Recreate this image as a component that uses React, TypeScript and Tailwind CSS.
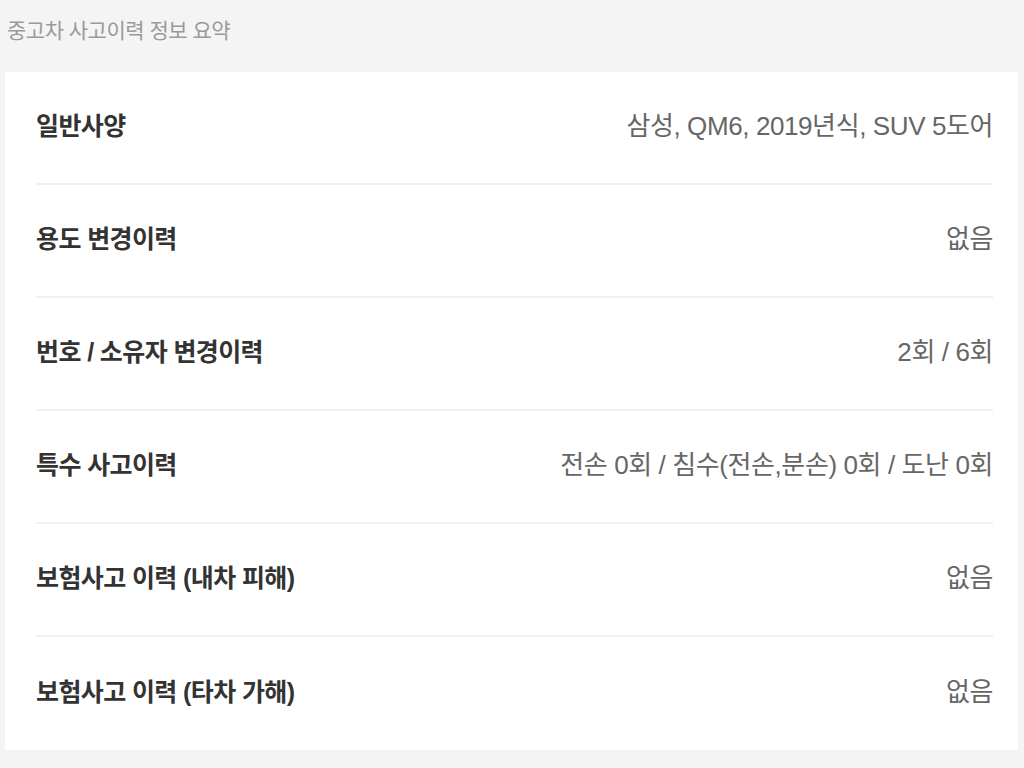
import React from "react";

const rows: [string, string][] = [
  ["일반사양", "삼성, QM6, 2019년식, SUV 5도어"],
  ["용도 변경이력", "없음"],
  ["번호 / 소유자 변경이력", "2회 / 6회"],
  ["특수 사고이력", "전손 0회 / 침수(전손,분손) 0회 / 도난 0회"],
  ["보험사고 이력 (내차 피해)", "없음"],
  ["보험사고 이력 (타차 가해)", "없음"],
];

export default function App() {
  return (
    <div
      className="w-[1024px] h-[768px] bg-[#f4f4f4] overflow-hidden"
      style={{ fontFamily: '"Liberation Sans", "Noto Sans CJK KR", sans-serif' }}
    >
      <div className="h-[72px] pl-[7px] pt-[16px] text-[21px] leading-[30px] text-[#9a9a9a] tracking-[-0.5px]">
        중고차 사고이력 정보 요약
      </div>
      <div className="ml-[5px] mr-[6px] bg-white pl-[31px] pr-[25px]">
        {rows.map(([label, value], i) => (
          <div
            key={i}
            className={`flex items-center justify-between h-[113px] pb-[2px] ${
              i < rows.length - 1 ? "border-b-2 border-[#f0f0f0]" : ""
            }`}
          >
            <span className="text-[25px] font-bold text-[#333333] tracking-[-0.6px]">
              {label}
            </span>
            <span className="text-[26px] text-[#666666] tracking-[-0.4px]">
              {value}
            </span>
          </div>
        ))}
      </div>
    </div>
  );
}
